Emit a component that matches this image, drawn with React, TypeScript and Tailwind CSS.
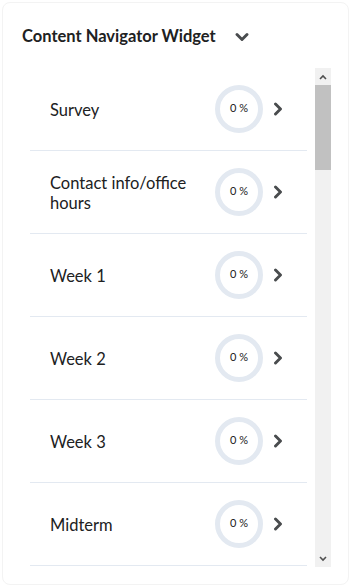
import React from "react";

const items = [
  "Survey",
  "Contact info/office hours",
  "Week 1",
  "Week 2",
  "Week 3",
  "Midterm",
];

function ProgressRing() {
  return (
    <div className="relative w-[48px] h-[48px] flex items-center justify-center">
      <svg width="48" height="48" viewBox="0 0 48 48" className="absolute inset-0">
        <circle cx="24" cy="24" r="21.5" fill="none" stroke="#e3e9f1" strokeWidth="5" />
      </svg>
      <span className="relative text-[11px] text-[#202122] leading-none -mt-[3px]">0 %</span>
    </div>
  );
}

function ChevronRight() {
  return (
    <svg width="10" height="14" viewBox="0 0 10 14">
      <polyline
        points="2.5,2 7.5,7 2.5,12"
        fill="none"
        stroke="#494c4e"
        strokeWidth="2.9"
        strokeLinecap="round"
        strokeLinejoin="round"
      />
    </svg>
  );
}

function Scrollbar() {
  return (
    <div className="w-[16px] h-full flex flex-col bg-[#f1f1f1]">
      <div className="h-[17px] flex items-center justify-center">
        <svg width="8" height="6" viewBox="0 0 8 6">
          <polyline points="1,5 4,2 7,5" fill="none" stroke="#505050" strokeWidth="1.6" />
        </svg>
      </div>
      <div className="h-[85px] bg-[#c1c1c1]" />
      <div className="flex-1" />
      <div className="h-[17px] flex items-center justify-center">
        <svg width="8" height="6" viewBox="0 0 8 6">
          <polyline points="1,1 4,4 7,1" fill="none" stroke="#505050" strokeWidth="1.6" />
        </svg>
      </div>
    </div>
  );
}

export default function App() {
  return (
    <div className="min-h-[588px] bg-white p-[2px]" style={{ fontFamily: "Lato, 'Open Sans', sans-serif" }}>
      <div className="w-[347px] h-[583px] border border-[#f3f3f3] rounded-[8px] bg-white flex flex-col">
        <div className="flex items-center pl-[19px] pt-[20px] h-[46px]">
          <h2 className="text-[16.5px] font-bold text-[#202122] leading-[24px]">Content Navigator Widget</h2>
          <svg width="14" height="10" viewBox="0 0 14 10" className="ml-[19px] mt-[1px]">
            <polyline
              points="2,2.5 7,7.5 12,2.5"
              fill="none"
              stroke="#494c4e"
              strokeWidth="2.9"
              strokeLinecap="round"
              strokeLinejoin="round"
            />
          </svg>
        </div>
        <div className="mt-[19px] ml-[27px] flex h-[499px]">
          <div className="w-[277px] h-full overflow-hidden">
            {items.map((name) => (
              <div
                key={name}
                className="h-[83px] border-b border-[#e3e9f1] flex items-center pl-[20px] pr-[24px]"
              >
                <span className="flex-1 text-[16.5px] leading-[20px] text-[#202122] pr-[12px] pt-[1px]">{name}</span>
                <ProgressRing />
                <div className="ml-[10px] flex items-center">
                  <ChevronRight />
                </div>
              </div>
            ))}
          </div>
          <div className="ml-[8px] h-full">
            <Scrollbar />
          </div>
        </div>
      </div>
    </div>
  );
}
